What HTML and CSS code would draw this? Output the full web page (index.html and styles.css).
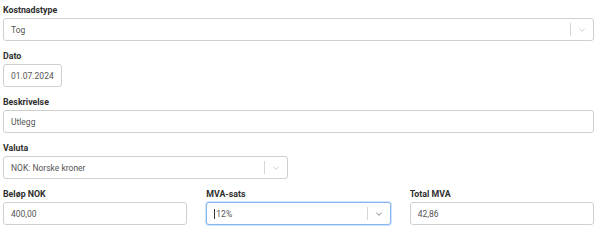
FILE: index.html
```html
<!DOCTYPE html>
<html lang="no">
<head>
    <meta charset="UTF-8">
    <title>Utlegg</title>
    <link rel="stylesheet" href="styles.css">
</head>
<body>
    <form class="expense-form">
        <div class="field">
            <label class="field-label">Kostnadstype</label>
            <div class="select">
                <span class="select-value">Tog</span>
                <span class="select-sep"></span>
                <svg class="select-arrow" viewBox="0 0 20 20" width="10" height="10"><path d="M4.5 7.5l5.5 5 5.5-5" fill="none" stroke="currentColor" stroke-width="1.6"/></svg>
            </div>
        </div>
        <div class="field">
            <label class="field-label">Dato</label>
            <input class="input input-date" type="text" value="01.07.2024">
        </div>
        <div class="field">
            <label class="field-label">Beskrivelse</label>
            <input class="input" type="text" value="Utlegg">
        </div>
        <div class="field">
            <label class="field-label">Valuta</label>
            <div class="select select-half">
                <span class="select-value">NOK: Norske kroner</span>
                <span class="select-sep"></span>
                <svg class="select-arrow" viewBox="0 0 20 20" width="10" height="10"><path d="M4.5 7.5l5.5 5 5.5-5" fill="none" stroke="currentColor" stroke-width="1.6"/></svg>
            </div>
        </div>
        <div class="field-row">
            <div class="field">
                <label class="field-label">Beløp NOK</label>
                <input class="input" type="text" value="400,00">
            </div>
            <div class="field">
                <label class="field-label">MVA-sats</label>
                <div class="select is-focused">
                    <span class="select-value"><span class="caret"></span>12%</span>
                    <span class="select-sep"></span>
                    <svg class="select-arrow" viewBox="0 0 20 20" width="10" height="10"><path d="M4.5 7.5l5.5 5 5.5-5" fill="none" stroke="currentColor" stroke-width="1.8"/></svg>
                </div>
            </div>
            <div class="field">
                <label class="field-label">Total MVA</label>
                <input class="input" type="text" value="42,86">
            </div>
        </div>
    </form>
</body>
</html>
```

FILE: styles.css
```css
body {
    margin: 0;
    background: #ffffff;
    font-family: Roboto, "Liberation Sans", Arial, sans-serif;
    color: #333;
}

.expense-form {
    padding: 4px 10px 0 3px;
}

.field {
    display: flex;
    flex-direction: column;
    align-items: flex-start;
    margin-bottom: 9px;
}

.field-label {
    font-size: 8.8px;
    font-weight: 700;
    line-height: 12px;
    margin-bottom: 2px;
    color: #2e2e2e;
}

.input, .select {
    box-sizing: border-box;
    width: 100%;
    height: 23px;
    border: 1px solid #cfcfcf;
    border-radius: 3px;
    background: #fff;
    font-family: inherit;
    font-size: 8.5px;
    color: #555;
    padding: 0 7px;
    margin: 0;
    outline: none;
}

.input-date {
    width: 59px;
}

.select {
    display: flex;
    align-items: center;
    padding-right: 0;
}

.select-half {
    width: 285px;
}

.select-value {
    flex: 1;
    display: flex;
    align-items: center;
}

.select-sep {
    width: 1px;
    height: 13px;
    background: #d6d6d6;
}

.select-arrow {
    color: #c8c8c8;
    margin: 0 6px;
}

.select.is-focused {
    border-color: #86b6f2;
    box-shadow: 0 0 0 1px #d2e4fb;
}

.select.is-focused .select-arrow {
    color: #777;
}

.caret {
    display: inline-block;
    width: 1px;
    height: 10px;
    background: #333;
    margin-right: 1px;
}

.field-row {
    display: grid;
    grid-template-columns: 1fr 1fr 1fr;
    column-gap: 19px;
}
```
